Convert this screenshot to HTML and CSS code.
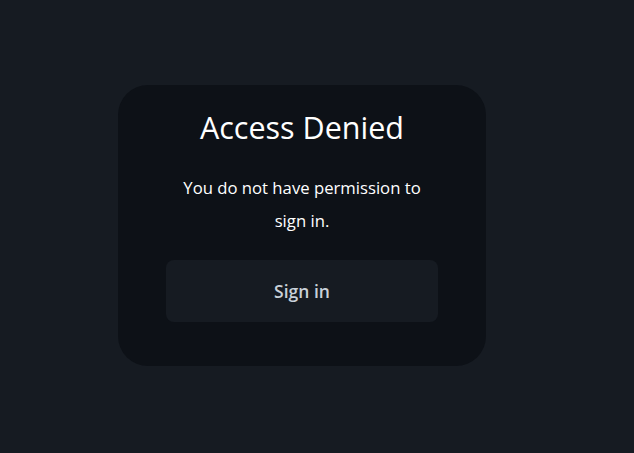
FILE: index.html
```html
<!DOCTYPE html>
<html lang="en">
<head>
<meta charset="utf-8">
<title>Access Denied</title>
<link rel="stylesheet" href="styles.css">
</head>
<body>
<main class="page">
  <div class="card">
    <h1 class="title">Access Denied</h1>
    <p class="message">You do not have permission to sign in.</p>
    <a class="button" href="#">Sign in</a>
  </div>
</main>
</body>
</html>
```
FILE: styles.css
```css
html, body {
  margin: 0;
  height: 100%;
}
body {
  background: #161b22;
  font-family: "Open Sans", "Noto Sans", sans-serif;
  color: #ffffff;
}
.page {
  height: 100%;
  display: flex;
  align-items: center;
  justify-content: center;
  padding: 0 30px 2px 0;
  box-sizing: border-box;
}
.card {
  width: 368px;
  box-sizing: border-box;
  background: #0d1117;
  border-radius: 30px;
  padding: 22px 48px 44px;
  display: flex;
  flex-direction: column;
  align-items: stretch;
  text-align: center;
}
.title {
  margin: 0;
  font-size: 30.5px;
  line-height: 40px;
  font-weight: 400;
  color: #ffffff;
}
.message {
  margin: 24px 0 23px;
  padding: 0 12px;
  font-size: 16.7px;
  line-height: 33px;
  color: #ffffff;
}
.button {
  display: flex;
  align-items: center;
  justify-content: center;
  height: 62px;
  background: #161b22;
  border-radius: 8px;
  color: #c9d1d9;
  font-size: 17.5px;
  font-weight: 600;
  text-decoration: none;
}
```
